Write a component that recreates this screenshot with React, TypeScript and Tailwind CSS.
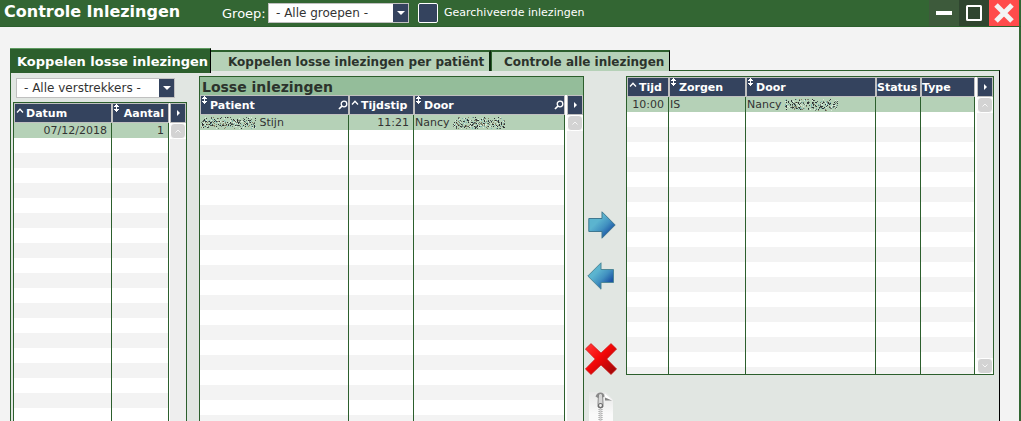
import React from "react";
import clsx from "clsx";

type Column = {
  label: string;
  width: number;
  sort?: "asc" | "both";
  search?: boolean;
  align?: "right";
  headAlign?: "right";
};

type GridProps = {
  label: string;
  columns: Column[];
  row: React.ReactNode[];
  lines: number;
  title?: string;
  className?: string;
  gap?: string;
  scrollDown?: boolean;
};

const SortAsc = () => (
  <svg width="8" height="5" viewBox="0 0 8 5" className="shrink-0" aria-hidden="true">
    <path d="M1 4.5 4 1.2 7 4.5" fill="none" stroke="#fff" strokeWidth="1.3" />
  </svg>
);

const SortBoth = () => (
  <svg width="5" height="9" viewBox="0 0 5 9" className="shrink-0" shapeRendering="crispEdges" aria-hidden="true">
    <path d="M2 0h1v1h1v1h1v1H0V2h1V1h1zM2 3h1v2H2zM0 5h5v1H4v1H3v1H2V7H1V6H0z" fill="#fff" />
  </svg>
);

const SearchIcon = () => (
  <svg width="10" height="10" viewBox="0 0 10 10" className="shrink-0" aria-hidden="true">
    <circle cx="6" cy="4" r="2.8" fill="none" stroke="#fff" strokeWidth="1.3" />
    <path d="M4 6 1 9" stroke="#fff" strokeWidth="1.7" />
  </svg>
);

const Chevron = ({ down }: { down?: boolean }) => (
  <svg width="6" height="4" viewBox="0 0 6 4" aria-hidden="true">
    <path d={down ? "M.5.5 3 3 5.5.5" : "M.5 3.5 3 1 5.5 3.5"} fill="none" stroke="#f6f6f6" />
  </svg>
);

// names are scrambled into pixel noise
const Scramble = ({ width, seed }: { width: number; seed: number }) => {
  const colors = ["#2f3336", "#2f3336", "#4c5451", "#6d7d70", "#7fb6b4", "#8c8468", "#dcebdc"];
  const dots: React.ReactNode[] = [];
  let n = seed;
  const next = () => {
    n = (n * 1103515245 + 12345) % 2147483648;
    return n / 2147483648;
  };
  for (let y = 0; y < 12; y++) {
    for (let x = 0; x < width; x++) {
      const edge = y < 3 || y > 9;
      const a = next();
      const b = next();
      if (a < (edge ? 0.2 : 0.46)) {
        dots.push(<rect key={`${x}-${y}`} x={x} y={y} width="1" height="1" fill={colors[Math.floor(b * colors.length)]} />);
      }
    }
  }
  return (
    <svg width={width} height="12" className="inline-block align-middle" shapeRendering="crispEdges" aria-hidden="true">
      {dots}
    </svg>
  );
};

const Grid = ({ label, columns, row, lines, title, className, gap = "gap-0.5", scrollDown }: GridProps) => (
  <section className={clsx("flex flex-col overflow-hidden border border-[#2c5f2d] bg-white", className)}>
    {title && (
      <h2 className="h-[18px] shrink-0 bg-[#94bd9a] pt-px pl-0.5 text-[14px] leading-[18px] font-bold text-[#2b332c]">{title}</h2>
    )}
    <div className={clsx("flex min-h-0 flex-1", gap)}>
      <div className="min-w-0 flex-1 overflow-hidden">
        <table aria-label={label} className="w-full table-fixed border-separate border-spacing-0">
          <colgroup>
            {columns.map((column) => (
              <col key={column.label} style={{ width: column.width }} />
            ))}
          </colgroup>
          <thead>
            <tr>
              {columns.map((column) => (
                <th key={column.label} className="h-5 border border-[#c0c0c0] bg-[#34435e] p-0 text-left text-[11px] leading-4 font-bold text-white">
                  <div className="flex h-[18px] items-center">
                    {column.sort && (
                      <span className={clsx("flex h-full w-[9px] items-start pl-px", column.sort === "asc" && "pt-1")}>
                        {column.sort === "asc" ? <SortAsc /> : <SortBoth />}
                      </span>
                    )}
                    <span className={clsx("flex-1 pt-0.5 whitespace-nowrap", column.headAlign === "right" ? "pr-1 text-right" : column.sort === "asc" && "pl-0.5")}>
                      {column.label}
                    </span>
                    {column.search && <SearchIcon />}
                  </div>
                </th>
              ))}
            </tr>
          </thead>
          <tbody>
            {Array.from({ length: lines }, (_, i) => (
              <tr key={i} className={i === 0 ? "bg-[#b5d1b7]" : i % 2 ? "bg-white" : "bg-[#f3f3f3]"}>
                {columns.map((column, j) => (
                  <td
                    key={column.label}
                    className={clsx(
                      "h-[15px] overflow-hidden border-r border-[#2c5f2d] p-0 pt-px text-[11px] leading-[14px] whitespace-nowrap text-[#333]",
                      column.align === "right" ? "pr-1 text-right" : "pl-px"
                    )}
                  >
                    {i === 0 && row[j]}
                  </td>
                ))}
              </tr>
            ))}
          </tbody>
        </table>
      </div>
      <div className="flex w-4 shrink-0 flex-col bg-[#eee]">
        <button aria-label="Kolommen" className="flex h-5 shrink-0 items-center justify-center border border-[#c0c0c0] bg-[#34435e]">
          <svg width="3" height="6" viewBox="0 0 3 6" aria-hidden="true">
            <path d="M0 0 3 3 0 6z" fill="#fff" />
          </svg>
        </button>
        <div className="shrink-0 bg-white">
          <button aria-label="Omhoog" className="flex h-4 w-full items-center justify-center rounded-sm border border-white bg-[#d3d3d3]">
            <Chevron />
          </button>
        </div>
        {scrollDown && (
          <div className="mt-auto shrink-0 bg-white">
            <button aria-label="Omlaag" className="flex h-4 w-full items-center justify-center rounded-sm border border-white bg-[#d3d3d3]">
              <Chevron down />
            </button>
          </div>
        )}
      </div>
    </div>
  </section>
);

const Select = ({ id, label, option, className }: { id: string; label: string; option: string; className: string }) => (
  <div className={clsx("relative", className)}>
    <select
      id={id}
      aria-label={label}
      className="block h-5 w-full appearance-none border border-[#c0c0c0] bg-white pl-[7px] text-[12px] leading-4 text-[#333]"
    >
      <option>{option}</option>
    </select>
    <span className="pointer-events-none absolute inset-y-px right-px flex w-[15px] items-center justify-center bg-[#34435e]">
      <svg width="8" height="4" viewBox="0 0 8 4" aria-hidden="true">
        <path d="M0 0h8L4 4z" fill="#fff" />
      </svg>
    </span>
  </div>
);

const Arrow = ({ left }: { left?: boolean }) => (
  <svg width="28" height="28" viewBox="0 0 28 28" aria-hidden="true">
    <defs>
      <linearGradient id={left ? "arrow-left" : "arrow-right"} x1="0" y1="0" x2="1" y2="1">
        <stop offset="0.35" stopColor="#5bb4cf" />
        <stop offset="0.58" stopColor="#4190c0" />
        <stop offset="0.8" stopColor="#1c55a4" />
      </linearGradient>
    </defs>
    {left ? (
      <path d="M.8 14 14 .8V7.5h12.5v13H14v6.7z" fill="url(#arrow-left)" stroke="#4d8797" />
    ) : (
      <path d="M.8 7.5H14V.8L27.2 14 14 27.2v-6.7H.8z" fill="url(#arrow-right)" stroke="#3f7890" />
    )}
  </svg>
);

const Tools = () => (
  <div className="flex w-[42px] shrink-0 flex-col items-start pt-[140px] pl-px">
    <button aria-label="Naar rechts" className="ml-[3px]">
      <Arrow />
    </button>
    <button aria-label="Naar links" className="mt-[23px] ml-0.5">
      <Arrow left />
    </button>
    <button aria-label="Verwijderen" className="mt-[53px]">
      <svg width="32" height="32" viewBox="0 0 32 32" aria-hidden="true">
        <defs>
          <linearGradient id="cross" x1="0" y1="0" x2="1" y2="1">
            <stop offset="0.1" stopColor="#ff3030" />
            <stop offset="0.45" stopColor="#f40808" />
            <stop offset="0.9" stopColor="#a60808" />
          </linearGradient>
        </defs>
        <path
          d="M6 .6 16 10 26 .6 31.6 6 21.8 16 31.6 26 26 31.5 16 22 6 31.5 .4 26 10.2 16 .4 6z"
          fill="url(#cross)"
          stroke="#c91c1c"
          strokeWidth=".7"
          strokeLinejoin="round"
        />
      </svg>
    </button>
    <button aria-label="Archiveren" className="mt-[17px] ml-1">
      <svg width="24" height="32" viewBox="0 0 24 32" aria-hidden="true">
        <defs>
          <linearGradient id="paper" x1="0" y1="0" x2="0" y2="1">
            <stop offset="0" stopColor="#e6e7e6" />
            <stop offset="0.7" stopColor="#fafafa" />
          </linearGradient>
        </defs>
        <path d="M0 0h17l7 8v24H0z" fill="url(#paper)" />
        <path d="M16 1.5v6.5h7z" fill="#fff" />
        <path d="M16 5.5 23 8.5H16z" fill="#858585" />
        <path d="M6.5 4.5Q8 .5 11.5.5t4 4L13 6H9z" fill="#8b8b8b" />
        <path d="M9.5 2.5q2-2 4 0L14 11v4q-2.500 2.500-5 0v-4z" fill="#d6d6d6" stroke="#777" strokeWidth=".8" />
        <circle cx="11.500" cy="13.500" r="2" fill="#f1f1f1" stroke="#6d6d6d" strokeWidth="1.2" />
        <path d="M11.500 17v15" stroke="#9a9a9a" strokeWidth="4" strokeDasharray="1 1" />
        <path d="M11.500 17v15" stroke="#cfcfcf" strokeWidth="2" />
      </svg>
    </button>
  </div>
);

const verstrekkerColumns: Column[] = [
  { label: "Datum", width: 98, sort: "asc", align: "right" },
  { label: "Aantal", width: 57, sort: "both", align: "right", headAlign: "right" },
];

const losseColumns: Column[] = [
  { label: "Patient", width: 149, sort: "both", search: true },
  { label: "Tijdstip", width: 65, sort: "asc", align: "right" },
  { label: "Door", width: 151, sort: "both", search: true },
];

const zorgColumns: Column[] = [
  { label: "Tijd", width: 42, sort: "asc", align: "right" },
  { label: "Zorgen", width: 77, sort: "both" },
  { label: "Door", width: 130, sort: "both" },
  { label: "Status", width: 45 },
  { label: "Type", width: 54 },
];

const TitleBar = () => (
  <header className="flex h-[27px] shrink-0 items-start border-b border-[#2c5f2d] bg-[#336633] text-white">
    <h1 className="w-[222px] pl-1 text-[16px] leading-6 font-bold whitespace-nowrap">Controle Inlezingen</h1>
    <label htmlFor="groep" className="w-[46px] pt-1 text-[13px] leading-5">
      Groep:
    </label>
    <Select id="groep" label="Groep" option="- Alle groepen -" className="mt-[3px] w-[141px]" />
    <label className="mt-[3px] ml-[9px] flex items-center gap-1.5 text-[11px] leading-5 whitespace-nowrap">
      <input type="checkbox" className="h-5 w-5 appearance-none rounded-xs border border-white bg-[#34435e]" />
      Gearchiveerde inlezingen
    </label>
    <div className="mr-0.5 ml-auto flex">
      <button aria-label="Minimaliseren" className="flex h-[26px] w-[30px] items-center justify-center bg-[#3d5a3b]">
        <svg width="16" height="4" aria-hidden="true">
          <path d="M0 0h16v4H0z" fill="#fff" />
        </svg>
      </button>
      <button aria-label="Maximaliseren" className="flex h-[26px] w-[30px] items-center justify-center bg-[#2f452f]">
        <svg width="16" height="16" aria-hidden="true">
          <rect x="1" y="1" width="14" height="14" rx=".5" fill="none" stroke="#fff" strokeWidth="2" />
        </svg>
      </button>
      <button aria-label="Sluiten" className="flex h-[26px] w-[30px] items-center justify-center bg-[#ff4b4b]">
        <svg width="20" height="20" viewBox="0 0 20 20" aria-hidden="true">
          <path d="m2 2 16 16M18 2 2 18" stroke="#f3f3f3" strokeWidth="5" />
        </svg>
      </button>
    </div>
  </header>
);

const Tabs = () => (
  <nav role="tablist" className="flex h-[22px] shrink-0 items-start whitespace-nowrap">
    <button
      role="tab"
      aria-selected="true"
      className="relative h-[25px] w-[201px] border-t border-r border-t-[#5d9a5f] border-r-black bg-[#2c5f2d] pt-px pl-[7px] text-left text-[13px] leading-6 font-bold text-white"
    >
      Koppelen losse inlezingen
    </button>
    <button
      role="tab"
      aria-selected="false"
      className="relative mt-0.5 h-[21px] w-[280px] border-t-2 border-r-2 border-t-[#2c5f2d] border-r-[#0d2a0e] bg-[#b5d1b7] pl-[17px] text-left text-[12px] leading-5 font-bold text-[#2b332c]"
    >
      Koppelen losse inlezingen per patiënt
    </button>
    <button
      role="tab"
      aria-selected="false"
      className="relative mt-0.5 h-[21px] w-[179px] border-t-2 border-r border-l border-t-[#2c5f2d] border-r-black border-l-[#2c5f2d] bg-[#b5d1b7] pl-3 text-left text-[12px] leading-5 font-bold text-[#2b332c]"
    >
      Controle alle inlezingen
    </button>
  </nav>
);

const App = () => {
  return (
    <div className="flex h-screen flex-col overflow-hidden bg-[#f3f3f3] font-['Verdana','DejaVu_Sans',sans-serif]">
      <TitleBar />
      <div className="flex min-h-0 flex-1 flex-col border-r-2 border-[#336633] pt-[21px] pr-[19px] pl-2.5">
        <Tabs />
        <main className="flex min-h-0 flex-1 border-t border-r border-l border-t-[#2c5f2d] border-r-black border-l-[#2c5f2d] bg-[#e1e6e2] pr-[5px] pl-0.5">
          <div className="mr-3 flex w-[174px] shrink-0 flex-col pt-[7px]">
            <Select id="verstrekkers" label="Verstrekkers" option="- Alle verstrekkers -" className="ml-[3px] w-[159px]" />
            <Grid
              label="Datums"
              columns={verstrekkerColumns}
              row={["07/12/2018", "1"]}
              lines={24}
              gap="gap-px"
              className="mt-1 min-h-0 flex-1 border-b-0"
            />
          </div>
          <div className="flex min-w-0 flex-[385_1_0%] flex-col pt-[5px]">
            <Grid
              label="Losse inlezingen"
              title="Losse inlezingen"
              columns={losseColumns}
              row={[
                <>
                  <Scramble width={55} seed={17} /> Stijn
                </>,
                "11:21",
                <>
                  Nancy <Scramble width={52} seed={91} />
                </>,
              ]}
              lines={24}
              className="min-h-0 flex-1 border-b-0"
            />
          </div>
          <Tools />
          <div className="min-w-0 flex-[368_1_0%] pt-[5px]">
            <Grid
              label="Zorgen"
              columns={zorgColumns}
              row={[
                "10:00",
                "IS",
                <>
                  Nancy <Scramble width={53} seed={53} />
                </>,
                "",
                "",
              ]}
              lines={19}
              scrollDown
              className="h-[299px]"
            />
          </div>
        </main>
      </div>
    </div>
  );
};

export default App;
